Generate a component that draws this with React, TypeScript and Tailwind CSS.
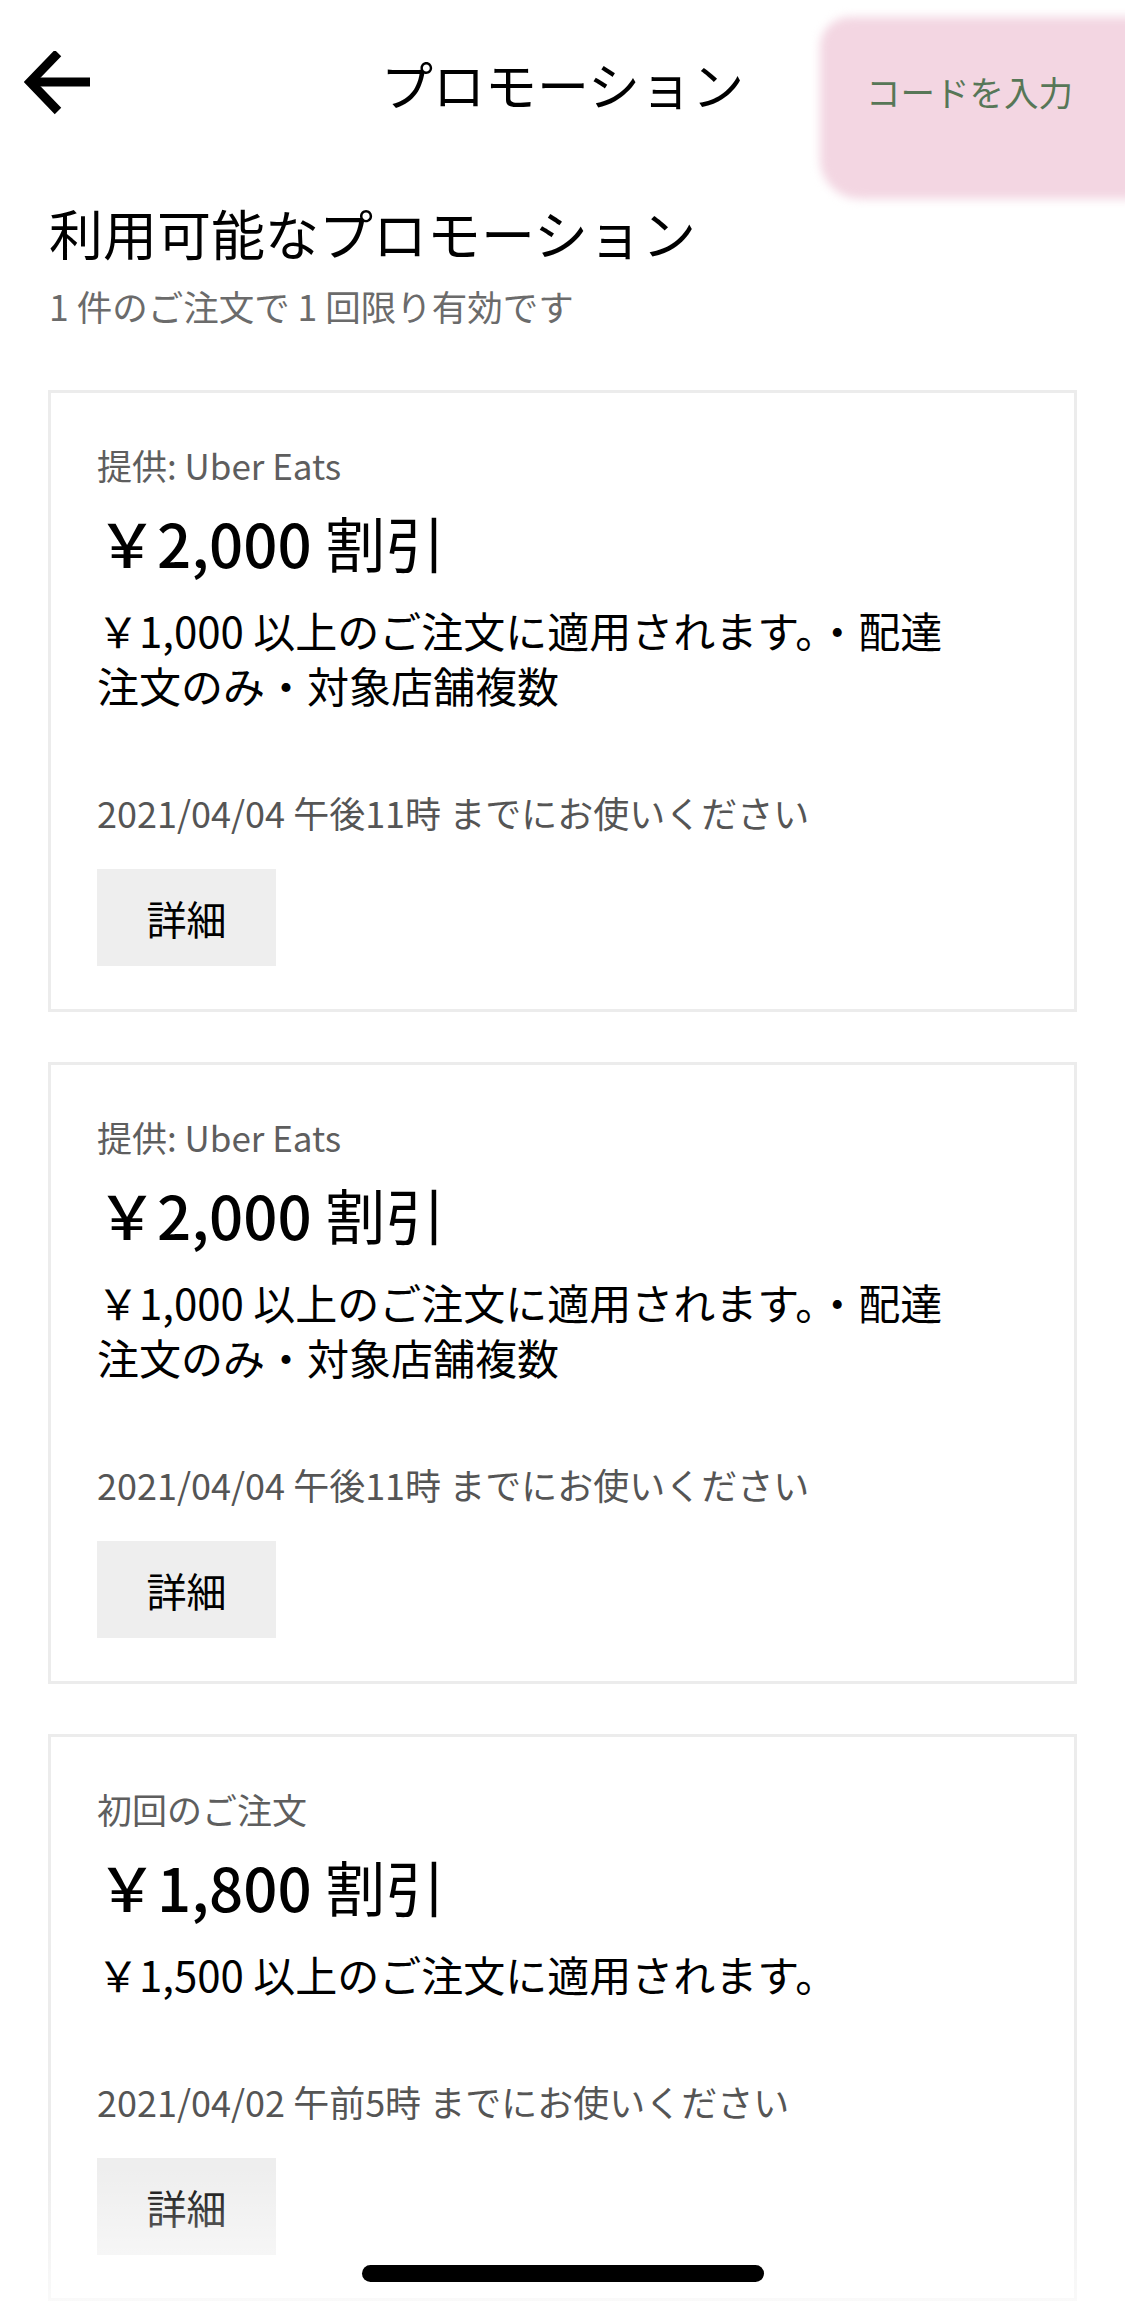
import React from 'react';

type Promo = {
  id: number;
  label: string;
  price: string;
  lines: string[];
  expires: string;
};

const promos: Promo[] = [
  {
    id: 1,
    label: '提供: Uber Eats',
    price: '￥2,000',
    lines: ['￥1,000 以上のご注文に適用されます。・配達', '注文のみ・対象店舗複数'],
    expires: '2021/04/04 午後11時 までにお使いください',
  },
  {
    id: 2,
    label: '提供: Uber Eats',
    price: '￥2,000',
    lines: ['￥1,000 以上のご注文に適用されます。・配達', '注文のみ・対象店舗複数'],
    expires: '2021/04/04 午後11時 までにお使いください',
  },
  {
    id: 3,
    label: '初回のご注文',
    price: '￥1,800',
    lines: ['￥1,500 以上のご注文に適用されます。'],
    expires: '2021/04/02 午前5時 までにお使いください',
  },
];

const BackArrow: React.FC = () => (
  <svg width="70" height="64" viewBox="0 0 70 64" fill="none" xmlns="http://www.w3.org/2000/svg">
    <path d="M6 31H66" stroke="#000" strokeWidth="9" />
    <path d="M34 2L6 31L34 60" stroke="#000" strokeWidth="9" strokeLinejoin="miter" />
  </svg>
);

const PromoCard: React.FC<{ promo: Promo }> = ({ promo }) => (
  <div className="border-[3px] border-[#ececec] bg-white px-[46px] pt-[50px] pb-[43px]">
    <p className="text-[35px] leading-[44px] text-[#5e5e5e]">{promo.label}</p>
    <p className="mt-[21px] text-[60px] leading-[68px] text-black">
      <span className="font-medium">{promo.price}</span> 割引
    </p>
    <p className="mt-[26px] text-[42px] leading-[55px] text-black">
      {promo.lines.map((line) => (
        <span key={line} className="block whitespace-nowrap">
          {line}
        </span>
      ))}
    </p>
    <p className="mt-[77px] text-[36px] leading-[46px] text-[#555555]">{promo.expires}</p>
    <button className="mt-[34px] flex h-[97px] w-[179px] items-center justify-center bg-[#eeeeee] text-[40px] text-black">
      詳細
    </button>
  </div>
);

export default function App() {
  return (
    <div
      className="relative h-[2306px] w-full overflow-hidden bg-white"
      style={{ fontFamily: '"Noto Sans CJK JP", "Noto Sans", sans-serif' }}
    >
      {/* header */}
      <div className="grid h-[164px] grid-cols-[1fr_auto_1fr] items-center">
        <div className="pl-[24px] pt-[2px]">
          <BackArrow />
        </div>
        <h1 className="text-[52px] leading-[64px] text-black pt-[4px]">プロモーション</h1>
        <div className="flex justify-end pr-[52px] pt-[18px]">
          <div className="relative">
            <div className="absolute -left-[46px] -top-[52px] -right-[70px] -bottom-[86px] rounded-tl-[30px] rounded-bl-[40px] rounded-br-[12px] bg-[#f3d6e2] blur-[5px]" />
            <button className="relative text-[34.5px] leading-[44px] text-[#577757]">コードを入力</button>
          </div>
        </div>
      </div>

      {/* section heading */}
      <div className="px-[49px]">
        <h2 className="mt-[35px] text-[54px] leading-[68px] text-black">利用可能なプロモーション</h2>
        <p className="mt-[16px] text-[35.5px] leading-[46px] text-[#6b6b6b]">1 件のご注文で 1 回限り有効です</p>
      </div>

      {/* cards */}
      <div className="mx-[48px] mt-[61px] flex flex-col gap-[50px]">
        {promos.map((p) => (
          <PromoCard key={p.id} promo={p} />
        ))}
      </div>

      {/* bottom fade + home indicator */}
      <div className="pointer-events-none absolute bottom-0 left-0 right-0 h-[140px] bg-linear-to-b from-white/0 to-white/75" />
      <div className="absolute bottom-[24px] left-1/2 h-[17px] w-[402px] -translate-x-1/2 rounded-full bg-black" />
    </div>
  );
}
